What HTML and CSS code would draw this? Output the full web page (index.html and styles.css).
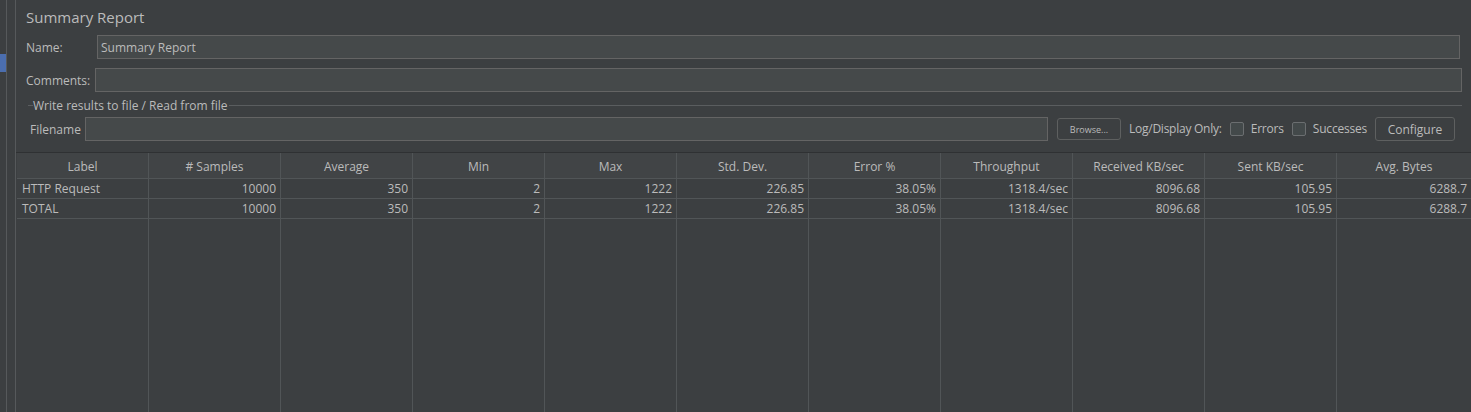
FILE: index.html
```html
<!DOCTYPE html>
<html>
<head>
<meta charset="utf-8">
<link rel="stylesheet" href="styles.css">
</head>
<body>
<div class="app">
  <div class="strip-a"><div class="sel"></div></div>
  <div class="strip-b"></div>
  <div class="main">
    <div class="title">Summary Report</div>
    <div class="row row-name">
      <span class="lbl lbl-name">Name:</span>
      <div class="field">Summary Report</div>
    </div>
    <div class="row row-comments">
      <span class="lbl lbl-comments">Comments:</span>
      <div class="field"></div>
    </div>
    <div class="group">
      <div class="legend"><span class="leg-line short"></span><span class="leg-text">Write results to file / Read from file</span><span class="leg-line long"></span></div>
      <div class="row row-file">
        <span class="lbl lbl-file">Filename</span>
        <div class="field field-file"></div>
        <button class="btn btn-small">Browse...</button>
        <span class="lbl lbl-log">Log/Display Only:</span>
        <span class="check"></span><span class="lbl lbl-err">Errors</span>
        <span class="check"></span><span class="lbl lbl-succ">Successes</span>
        <button class="btn btn-conf">Configure</button>
      </div>
    </div>
    <div class="table">
      <div class="tr th">
        <div class="c">Label</div><div class="c"># Samples</div><div class="c">Average</div><div class="c">Min</div><div class="c">Max</div><div class="c">Std. Dev.</div><div class="c">Error %</div><div class="c">Throughput</div><div class="c">Received KB/sec</div><div class="c">Sent KB/sec</div><div class="c">Avg. Bytes</div>
      </div>
      <div class="tr td">
        <div class="c l">HTTP Request</div><div class="c">10000</div><div class="c">350</div><div class="c">2</div><div class="c">1222</div><div class="c">226.85</div><div class="c">38.05%</div><div class="c">1318.4/sec</div><div class="c">8096.68</div><div class="c">105.95</div><div class="c">6288.7</div>
      </div>
      <div class="tr td">
        <div class="c l">TOTAL</div><div class="c">10000</div><div class="c">350</div><div class="c">2</div><div class="c">1222</div><div class="c">226.85</div><div class="c">38.05%</div><div class="c">1318.4/sec</div><div class="c">8096.68</div><div class="c">105.95</div><div class="c">6288.7</div>
      </div>
      <div class="tr filler">
        <div class="c"></div><div class="c"></div><div class="c"></div><div class="c"></div><div class="c"></div><div class="c"></div><div class="c"></div><div class="c"></div><div class="c"></div><div class="c"></div><div class="c"></div>
      </div>
    </div>
  </div>
</div>
</body>
</html>
```
FILE: styles.css
```css
html, body {
  margin: 0;
  padding: 0;
  background: #3c3f41;
}
body {
  font-family: "Open Sans", "Noto Sans", sans-serif;
  font-size: 12px;
  color: #bbbbbb;
}
.app {
  display: flex;
  width: 1471px;
  height: 412px;
  overflow: hidden;
}
.strip-a {
  width: 6px;
  border-right: 1px solid #56595b;
  padding-top: 54px;
  box-sizing: content-box;
}
.sel {
  width: 6px;
  height: 18px;
  background: #4b6eaf;
}
.strip-b {
  width: 8px;
  border-right: 1px solid #56595b;
}
.main {
  flex: 1;
  display: flex;
  flex-direction: column;
  min-width: 0;
}
.title {
  font-size: 15px;
  line-height: 20px;
  margin: 7px 0 0 10px;
  color: #bbbbbb;
}
.row {
  display: flex;
  align-items: center;
}
.lbl {
  white-space: nowrap;
  line-height: 16px;
}
.field {
  flex: 1;
  height: 22px;
  background: #45494a;
  border: 1px solid #646464;
  line-height: 24px;
  padding-left: 3px;
  box-sizing: content-box;
}
.row-name {
  margin: 8px 11px 0 10px;
}
.lbl-name { width: 71px; padding-top: 1px; }
.row-comments {
  margin: 9px 9px 0 10px;
}
.lbl-comments { width: 69px; padding-top: 1px; }
.group {
  margin: 5px 9px 0 12px;
}
.legend {
  display: flex;
  align-items: center;
  height: 16px;
}
.leg-line {
  height: 1px;
  background: #5a5d5f;
}
.leg-line.short { width: 5px; }
.leg-line.long { flex: 1; }
.leg-text {
  padding: 0 1px 0 0;
  white-space: nowrap;
}
.row-file {
  margin: 4px 7px 0 2px;
}
.lbl-file { width: 55px; padding-top: 1px; }
.field-file {
  flex: none;
  width: 961px;
  padding-left: 0;
}
.btn {
  font-family: "Open Sans", "Noto Sans", sans-serif;
  color: #bbbbbb;
  background: #3c3f41;
  border: 1px solid #5e6060;
  border-radius: 3px;
  padding: 0;
}
.btn-small {
  width: 64px;
  height: 22px;
  font-size: 9px;
  margin-left: 9px;
}
.lbl-log { margin-left: 8px; letter-spacing: -0.25px; }
.check {
  width: 12px;
  height: 12px;
  border: 1px solid #6b6e70;
  border-radius: 2px;
  background: #43494a;
  margin-left: 8px;
}
.lbl-err { margin-left: 7px; letter-spacing: -0.2px; }
.lbl-succ { margin-left: 7px; letter-spacing: -0.2px; }
.btn-conf {
  width: 80px;
  height: 24px;
  font-size: 12px;
  margin-left: auto;
}
.table {
  flex: 1;
  display: flex;
  flex-direction: column;
  margin-top: 11px;
  padding-left: 1px;
  border-top: 1px solid #2f3133;
}
.tr {
  display: grid;
  grid-template-columns: repeat(10, 132px) 1fr;
}
.c {
  border-right: 1px solid #515557;
  white-space: nowrap;
  overflow: hidden;
}
.th {
  height: 25px;
  background: #414446;
  border-bottom: 1px solid #515557;
}
.th .c {
  text-align: center;
  line-height: 28px;
}
.td {
  height: 19px;
  border-bottom: 1px solid #515557;
}
.td .c {
  text-align: right;
  line-height: 19px;
  padding-right: 4px;
}
.td .c.l {
  text-align: left;
  padding-left: 5px;
}
.filler {
  flex: 1;
}
.c:last-child {
  border-right: none;
}
```
